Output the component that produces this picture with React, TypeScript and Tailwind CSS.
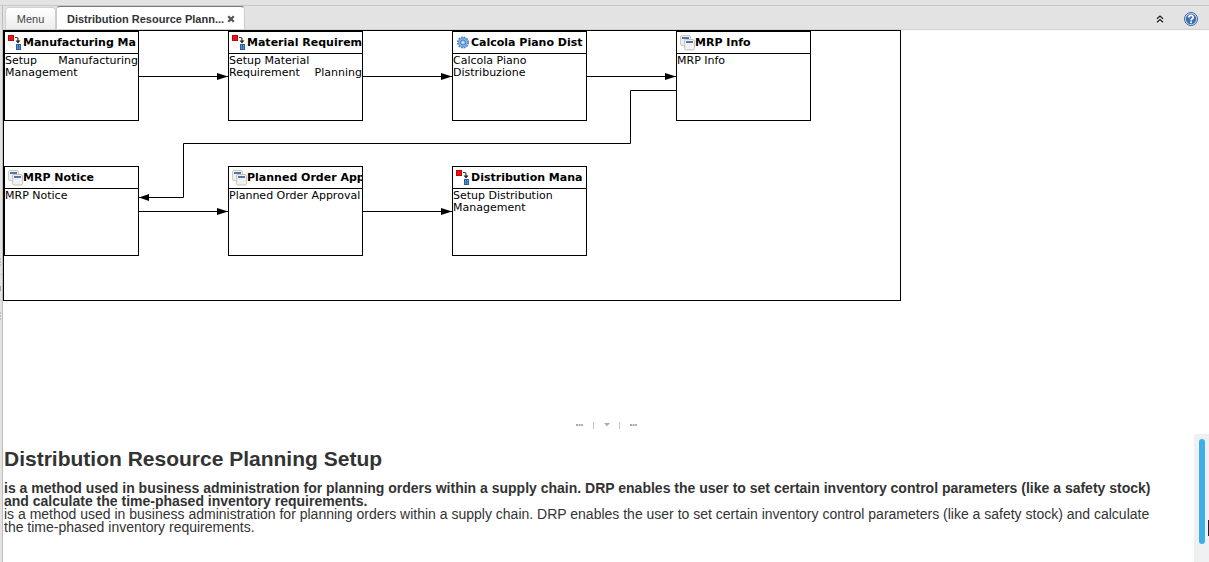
import React from "react";

type IconKind = "process" | "window" | "gear";

interface WorkflowNode {
  title: string;
  icon: IconKind;
  lines: { text: string; justify?: boolean }[];
  place: string;
}

const nodes: WorkflowNode[] = [
  {
    title: "Manufacturing Ma",
    icon: "process",
    lines: [{ text: "Setup Manufacturing", justify: true }, { text: "Management" }],
    place: "left-0 top-0",
  },
  {
    title: "Material Requirem",
    icon: "process",
    lines: [{ text: "Setup Material" }, { text: "Requirement Planning", justify: true }],
    place: "left-[224px] top-0",
  },
  {
    title: "Calcola Piano Dist",
    icon: "gear",
    lines: [{ text: "Calcola Piano" }, { text: "Distribuzione" }],
    place: "left-[448px] top-0",
  },
  { title: "MRP Info", icon: "window", lines: [{ text: "MRP Info" }], place: "left-[672px] top-0" },
  { title: "MRP Notice", icon: "window", lines: [{ text: "MRP Notice" }], place: "left-0 top-[135px]" },
  {
    title: "Planned Order App",
    icon: "window",
    lines: [{ text: "Planned Order Approval" }],
    place: "left-[224px] top-[135px]",
  },
  {
    title: "Distribution Mana",
    icon: "process",
    lines: [{ text: "Setup Distribution" }, { text: "Management" }],
    place: "left-[448px] top-[135px]",
  },
];

function NodeIcon({ kind }: { kind: IconKind }) {
  if (kind === "process") {
    return (
      <svg width="16" height="16" viewBox="0 0 16 16" className="shrink-0" aria-hidden="true">
        <rect x="1" y="0" width="6" height="6" fill="#b80808" />
        <rect x="2" y="1" width="4" height="4" fill="#ee1111" />
        <path d="M8 2.5h1.5q1.5 0 1.5 1.5v3" fill="none" stroke="#333" strokeWidth="1.2" />
        <path d="M8.5 5.5h5L11 8.5z" fill="#222" />
        <rect x="9" y="9" width="5" height="6" fill="#2a5ca8" />
        <path d="M10.5 10v4M12.5 10v4" stroke="#6f9cd6" />
        <path d="M9 12h5" stroke="#3465a4" strokeWidth="0.7" />
      </svg>
    );
  }
  if (kind === "gear") {
    return (
      <svg width="16" height="16" viewBox="0 0 16 16" className="shrink-0" aria-hidden="true">
        <circle cx="8" cy="7.5" r="5" fill="#9dbfe8" />
        <circle cx="8" cy="7.5" r="5.3" fill="none" stroke="#4a84cc" strokeWidth="1.5" strokeDasharray="1.9 0.87" />
        <circle cx="8" cy="7.5" r="4.3" fill="none" stroke="#5c91d4" strokeWidth="0.8" />
        <circle cx="8" cy="7.5" r="2.6" fill="none" stroke="#3d78c4" />
        <circle cx="8" cy="7.5" r="1" fill="#e8f0fa" />
      </svg>
    );
  }
  return (
    <svg width="16" height="16" viewBox="0 0 16 16" className="shrink-0" aria-hidden="true">
      <rect x="1.5" y="0.5" width="10" height="10" rx="1.5" fill="#eeeeec" stroke="#c9cac6" />
      <path d="M3 3h7" stroke="#2a55a5" strokeWidth="1.6" />
      <rect x="5.5" y="4.5" width="10" height="10.5" rx="1.5" fill="#f1f1ef" stroke="#c3c5c0" />
      <path d="M7 7h7" stroke="#2a55a5" strokeWidth="1.6" />
    </svg>
  );
}

function NodeCard({ node }: { node: WorkflowNode }) {
  return (
    <article
      className={`absolute h-[90px] w-[135px] overflow-hidden border border-black bg-white font-['DejaVu_Sans',sans-serif] text-[11px] leading-[12px] text-black ${node.place}`}
    >
      <h2 className="flex h-[22px] items-center overflow-hidden border-b border-black pl-[2px] font-bold whitespace-nowrap">
        <NodeIcon kind={node.icon} />
        {node.title}
      </h2>
      <div className="pt-px whitespace-nowrap">
        {node.lines.map((line) => (
          <p key={line.text} className={line.justify ? "[text-align-last:justify]" : ""}>
            {line.text}
          </p>
        ))}
      </div>
    </article>
  );
}

function Connectors() {
  return (
    <svg width="896" height="269" viewBox="0 0 896 269" className="absolute top-0 left-0" aria-hidden="true">
      <g fill="none" stroke="#000">
        <path d="M134 45.5h90M358 45.5h90M582 45.5h90M134 180.5h90M358 180.5h90" />
        <path d="M672 59.5h-45.5v53h-447v54H134" />
      </g>
      <path d="M213 42l11 3.5-11 3.5zM437 42l11 3.5-11 3.5zM661 42l11 3.5-11 3.5zM213 177l11 3.5-11 3.5zM437 177l11 3.5-11 3.5zM145 163l-10 3.5 10 3.5z" />
    </svg>
  );
}

function TabBar() {
  return (
    <header className="flex h-[24px] items-end justify-between border-b border-[#d0d0d0] pl-[2px] font-['Liberation_Sans',Arial,sans-serif] text-[11px]">
      <div role="tablist" className="flex h-[23px] items-end">
        <button
          role="tab"
          aria-selected="false"
          className="h-[22px] w-[51px] rounded-t border border-b-0 border-[#cfcfcf] bg-linear-to-b from-white to-[#ededed] pt-[2px] text-[#444]"
        >
          Menu
        </button>
        <div className="relative z-10 flex h-[23px] w-[189px] items-center rounded-t border border-t-[#777] border-x-[#ccc] border-b-0 bg-white pt-[2px] pl-[10px] text-[#333]">
          <button role="tab" aria-selected="true" className="font-bold whitespace-nowrap">
            Distribution Resource Plann...
          </button>
          <button aria-label="Close tab" className="ml-[3px]">
            <svg width="8" height="8" viewBox="0 0 8 8" aria-hidden="true">
              <path d="M1.2 1.2l5.6 5.6M6.8 1.2L1.2 6.8" stroke="#555" strokeWidth="2.3" />
            </svg>
          </button>
        </div>
      </div>
      <div className="flex h-full items-center gap-[20px] pr-[11px] pt-[2px]">
        <button aria-label="Collapse">
          <svg width="8" height="8" viewBox="0 0 8 8" aria-hidden="true">
            <path d="M1 3.7L4 1l3 2.7M1 7.2l3-2.7 3 2.7" fill="none" stroke="#222" strokeWidth="1.3" />
          </svg>
        </button>
        <button aria-label="Help">
          <svg width="14" height="14" viewBox="0 0 14 14" aria-hidden="true">
            <circle cx="7" cy="7" r="6.5" fill="#d5e1f0" stroke="#3465a4" />
            <circle cx="7" cy="7" r="5.2" fill="#3f6fae" />
            <path d="M4.8 5.5C4.8 2.7 9.3 2.8 9.2 5.4c0 1.4-2.1 1.4-2.1 3" fill="none" stroke="#fff" strokeWidth="1.7" />
            <rect x="6.2" y="9.4" width="1.8" height="1.7" fill="#fff" />
          </svg>
        </button>
      </div>
    </header>
  );
}

function Splitter() {
  return (
    <div role="separator" className="flex h-[18px] shrink-0 items-center justify-center">
      <svg width="64" height="8" viewBox="0 0 64 8" aria-hidden="true">
        <path d="M2 4h7M56 4h7" stroke="#aaa" strokeWidth="2" strokeDasharray="2 0.6" />
        <path d="M19.5 1v7M45.5 1v7" stroke="#c4c4c4" />
        <path d="M30 2h6l-3 3.2z" fill="#aaa" />
      </svg>
    </div>
  );
}

export default function App() {
  return (
    <div className="flex h-screen flex-col overflow-hidden bg-[#e3e3e3]">
      <div className="h-[6px] shrink-0 border-b border-[#c8c8c8]" />
      <div className="flex min-h-0 flex-1">
        <aside className="w-[3px] shrink-0 border-r border-[#bdbdbd] pt-[252px]">
          <svg width="2" height="62" viewBox="0 0 2 62" aria-hidden="true">
            <path d="M0 1h1M0 4h1M0 7h1M0 55h1M0 58h1M0 61h1" stroke="#b3c1d3" strokeWidth="2" />
            <path d="M0 28h1v5H0z" fill="#a9a0a0" />
            <path d="M0 16.5h2M0 42.5h2" stroke="#cfcfcf" />
          </svg>
        </aside>
        <main className="flex min-w-0 flex-1 flex-col">
          <TabBar />
          <div className="flex min-h-0 flex-1 flex-col bg-white">
            <section className="min-h-0 flex-[3_1_0%] overflow-hidden">
              <div className="relative h-[271px] w-[898px] border border-black">
                <Connectors />
                {nodes.map((node) => (
                  <NodeCard key={node.title} node={node} />
                ))}
              </div>
            </section>
            <Splitter />
            <section className="flex min-h-0 flex-[1_1_0%]">
              <div className="min-w-0 flex-1 pt-3 pr-7 pl-px font-['Liberation_Sans',Arial,sans-serif] text-[14px] leading-[13px] text-[#333]">
                <h1 className="mb-[11px] text-[21px] leading-[25px] font-bold">Distribution Resource Planning Setup</h1>
                <p className="font-bold">
                  is a method used in business administration for planning orders within a supply chain. DRP enables the
                  user to set certain inventory control parameters (like a safety stock) and calculate the time-phased
                  inventory requirements.
                </p>
                <p>
                  is a method used in business administration for planning orders within a supply chain. DRP enables the
                  user to set certain inventory control parameters (like a safety stock) and calculate the time-phased
                  inventory requirements.
                </p>
              </div>
              <div className="relative w-[15px] shrink-0 bg-[#eff0f1] pt-[5px] pl-[5px]">
                <div className="h-[105px] w-[6px] rounded-full bg-[#3daee9]" />
                <div className="absolute top-[86px] right-0 h-[16px] w-px bg-[#222]" />
              </div>
            </section>
          </div>
        </main>
      </div>
    </div>
  );
}
